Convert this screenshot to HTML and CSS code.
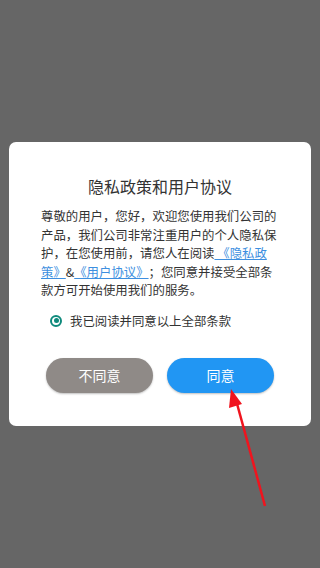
FILE: index.html
```html
<!DOCTYPE html>
<html lang="zh">
<head>
    <meta charset="UTF-8">
    <meta name="viewport" content="width=device-width, initial-scale=1.0">
    <title>隐私政策和用户协议</title>
    <link rel="stylesheet" href="styles.css">
</head>
<body>
    <div class="dialog">
        <h1 class="title">隐私政策和用户协议</h1>
        <p class="content">尊敬的用户，您好，欢迎您使用我们公司的产品，我们公司非常注重用户的个人隐私保护，在您使用前，请您人在阅读<a href="#"> 《隐私政策》</a>&amp;<a href="#">《用户协议》</a>；您同意并接受全部条款方可开始使用我们的服务。</p>
        <label class="check">
            <span class="radio"></span>
            <span>我已阅读并同意以上全部条款</span>
        </label>
        <div class="buttons">
            <button class="btn btn-no">不同意</button>
            <button class="btn btn-yes">同意</button>
        </div>
    </div>
    <svg class="arrow" width="320" height="568" viewBox="0 0 320 568">
        <line x1="265" y1="506" x2="236" y2="400" stroke="#f0141e" stroke-width="2.5"/>
        <polygon points="231,389 229,408 242,404" fill="#f0141e"/>
    </svg>
</body>
</html>
```

FILE: styles.css
```css
body {
    margin: 0;
    height: 568px;
    background-color: #666666;
    font-family: "Noto Sans CJK SC", "Noto Sans", sans-serif;
    text-spacing-trim: space-all;
    display: flex;
    align-items: center;
    justify-content: center;
}

.dialog {
    width: 302px;
    box-sizing: border-box;
    padding: 33px 32px 33px;
    background-color: #ffffff;
    border-radius: 7px;
}

.title {
    margin: 0 0 10px;
    text-align: center;
    font-size: 16px;
    font-weight: normal;
    line-height: 22px;
    color: #333333;
}

.content {
    margin: 0;
    font-size: 12.4px;
    line-height: 18.6px;
    color: #333333;
}

.content a {
    color: #3d8fe0;
    text-decoration: underline;
}

.check {
    display: flex;
    align-items: center;
    gap: 8px;
    margin: 12px 0 0 9px;
    font-size: 12.4px;
    color: #333333;
}

.radio {
    width: 12px;
    height: 12px;
    box-sizing: border-box;
    border: 2px solid #0f8a7c;
    border-radius: 50%;
    display: flex;
    align-items: center;
    justify-content: center;
}

.radio::after {
    content: "";
    width: 5px;
    height: 5px;
    border-radius: 50%;
    background-color: #0f8a7c;
}

.buttons {
    display: flex;
    justify-content: center;
    gap: 14px;
    margin-top: 28px;
}

.btn {
    width: 107px;
    height: 35px;
    border: none;
    border-radius: 18px;
    font-family: inherit;
    font-size: 14px;
    color: #ffffff;
    box-shadow: 0 1px 2px rgba(0, 0, 0, 0.25);
}

.btn-no {
    background-color: #8f8a87;
}

.btn-yes {
    background-color: #2196f3;
}

.arrow {
    position: absolute;
    left: 0;
    top: 0;
}
```
